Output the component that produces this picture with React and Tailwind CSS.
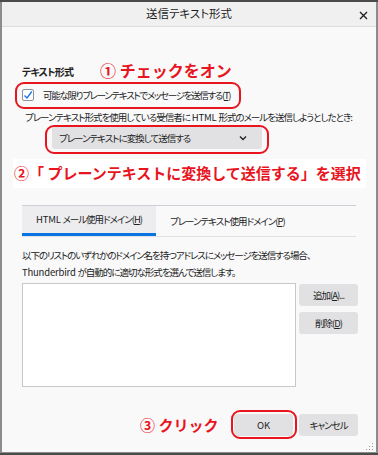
const jp = "font-['Noto_Sans_CJK_JP','Noto_Sans',sans-serif] [font-feature-settings:'palt']";
const base = 'text-[9.5px] text-[#222]';
const t = `${base} tracking-[-1px]`;

// latin words read better without the tight kana tracking
function L({ children }) {
  return <span className="tracking-[-0.2px]">{children}</span>;
}

function Btn({ children, className = '' }) {
  return (
    <button className={`h-[22px] w-[59px] rounded-[3px] bg-[#e1e1e3] ${t} flex items-center justify-center ${className}`}>
      {children}
    </button>
  );
}

function Mark({ className }) {
  return <div className={`absolute border-2 border-[#e8141e] rounded-[9px] pointer-events-none ${className}`} />;
}

function Note({ children, className }) {
  return (
    <div className={`absolute font-['Noto_Sans_CJK_JP',sans-serif] [font-feature-settings:normal] font-bold text-[15px] leading-[20px] text-[#e8141e] whitespace-nowrap ${className}`}>
      {children}
    </div>
  );
}

export default function App() {
  return (
    <div className={`w-[378px] h-[455px] bg-[#4b4b4b] pt-[2px] overflow-hidden ${jp}`}>
      <div className="relative h-[451px] bg-[#f9f9fa] border-x-2 border-b border-[#8c8c8c] flex flex-col">
        {/* title bar */}
        <div className="h-[25px] bg-[#f0f0f0] border-b border-[#dcdcdc] flex items-center relative">
          <div className="flex-1 text-center text-[11.5px] text-[#1e1e1e]">送信テキスト形式</div>
          <svg className="absolute right-[8px] top-[9px]" width="9" height="9" viewBox="0 0 9 9">
            <path d="M1 1L8 8M8 1L1 8" stroke="#222" strokeWidth="1.4" />
          </svg>
        </div>

        <div className="pl-[20px] pr-[18px] flex flex-col">
          <div className="mt-[38px] text-[10px] tracking-[-0.8px] leading-[14px] font-bold text-[#222]">テキスト形式</div>

          <div className="mt-[9px] flex items-center gap-[9px] h-[14px]">
            <div className="w-[12px] h-[12px] bg-white border border-[#8f8f9d] rounded-[2px] flex items-center justify-center">
              <svg width="10" height="10" viewBox="0 0 10 10">
                <path d="M1.5 5.5L4 8L8.8 1.5" fill="none" stroke="#1a73e8" strokeWidth="1.3" />
              </svg>
            </div>
            <span className={`${base} tracking-[-1.3px]`}>
              可能な限りプレーンテキストでメッセージを送信する(<span className="underline">T</span>)
            </span>
          </div>

          <div className={`mt-[8px] pl-[3px] leading-[14px] whitespace-nowrap ${t}`}>
            プレーンテキスト形式を使用している受信者に<L>&nbsp;HTML&nbsp;</L>形式のメールを送信しようとしたとき:
          </div>

          <div className={`mt-[3px] ml-[30px] w-[210px] h-[22px] rounded-[3px] bg-[#e1e1e3] flex items-center justify-between px-[7px] ${t}`}>
            <span>プレーンテキストに変換して送信する</span>
            <svg width="8" height="6" viewBox="0 0 8 6" className="mr-[8px]">
              <path d="M1 1.5L4 4.5L7 1.5" fill="none" stroke="#222" strokeWidth="1.4" />
            </svg>
          </div>

          {/* tabs */}
          <div className="mt-[56px] border-t border-[#cfcfd8] border-b border-b-[#e0e0e6] flex h-[32px] w-[334px]">
            <div className={`w-[134px] bg-[#ededf0] border-b-[3px] border-[#0a74e0] flex items-center justify-center ${t}`}>
              <L>HTML&nbsp;</L>メール使用ドメイン(<span className="underline">H</span>)
            </div>
            <div className={`flex-1 flex items-center pl-[14px] ${t}`}>
              プレーンテキスト使用ドメイン(<span className="underline">P</span>)
            </div>
          </div>

          <div className={`mt-[10px] leading-[17px] whitespace-nowrap ${base}`}>
            <div className="tracking-[-1.1px]">以下のリストのいずれかのドメイン名を持つアドレスにメッセージを送信する場合、</div>
            <div className="tracking-[-1px]"><L>Thunderbird&nbsp;</L>が自動的に適切な形式を選んで送信します。</div>
          </div>

          <div className="mt-[2px] flex gap-[3px]">
            <div className="w-[276px] h-[104px] bg-white border border-[#c8c8c8]" />
            <div className="flex flex-col gap-[6px] pt-[1px]">
              <Btn>追加(<span className="underline">A</span>)...</Btn>
              <Btn>削除(<span className="underline">D</span>)</Btn>
            </div>
          </div>

          <div className="mt-[27px] flex justify-end gap-[6px]">
            <Btn className="w-[58px]"><L>OK</L></Btn>
            <Btn>キャンセル</Btn>
          </div>
        </div>

        {/* resize grip */}
        <svg className="absolute right-[2px] bottom-[2px]" width="8" height="8" viewBox="0 0 8 8">
          <rect x="6" y="1" width="1" height="1" fill="#999" />
          <rect x="3" y="4" width="1" height="1" fill="#999" />
          <rect x="6" y="4" width="1" height="1" fill="#999" />
          <rect x="0" y="7" width="1" height="1" fill="#999" />
          <rect x="3" y="7" width="1" height="1" fill="#999" />
          <rect x="6" y="7" width="1" height="1" fill="#999" />
        </svg>

        {/* annotations */}
        <Note className="left-[98px] top-[58px] text-[16px]">① チェックをオン</Note>
        <Mark className="left-[13px] top-[80px] w-[226px] h-[27px]" />
        <Mark className="left-[43px] top-[123px] w-[224px] h-[29px]" />
        <div className="absolute left-[11px] top-[157px] w-[353px] h-[29px] bg-white flex items-center">
          <span className="pl-[1px] font-['Noto_Sans_CJK_JP',sans-serif] [font-feature-settings:normal] font-bold text-[15px] text-[#e8141e] whitespace-nowrap">
            ②「 プレーンテキストに変換して送信する」を選択
          </span>
        </div>
        <Note className="left-[138px] top-[413px]">③ クリック</Note>
        <Mark className="left-[229px] top-[408px] w-[66px] h-[29px] rounded-[6px]" />
      </div>
    </div>
  );
}
